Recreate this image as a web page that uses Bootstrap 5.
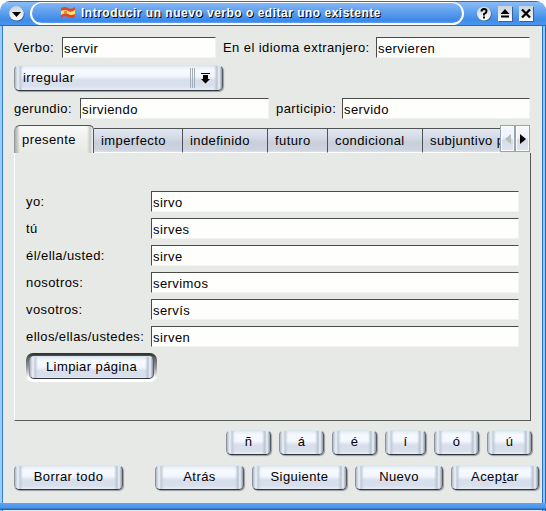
<!DOCTYPE html>
<html lang="es">
<head>
<meta charset="utf-8">
<title>Introducir un nuevo verbo o editar uno existente</title>
<link href="https://cdn.jsdelivr.net/npm/bootstrap@5.3.0/dist/css/bootstrap.min.css" rel="stylesheet">
<style>
body{width:546px;height:511px;background:#fff;font:13px/20px "Liberation Sans",Arial,sans-serif;letter-spacing:.42px;color:#000;overflow:hidden}
.window{width:546px;height:510px;margin-top:1px;background:linear-gradient(90deg,#9ccbfb 0 2px,#2f7fd6 2px 3px,#e7e9e6 3px 542px,#2a6fc0 542px 543px,#93c5fa 543px 545px,#2467ad 545px);border-radius:10px 10px 0 0;overflow:hidden}
.titlebar{height:25px;flex:none;background:linear-gradient(#2a6fc0 0 1px,#8dbdf5 1px,#68a7f0 9px,#3f8ce8 19px,#4b97ee 24px,#2668b5 24px);padding:0 7px 0 9px}
.caption-pill{width:434px;height:23px;margin-left:5px;border:2px solid #fff;border-top-width:1px;border-radius:13px;background:linear-gradient(#82b6f5,#3b87e6 18px,#5ca3f0);color:#fff;font-weight:bold;font-size:12px;letter-spacing:.5px;line-height:20px;text-shadow:1px 1px 0 #000;padding-left:28px;white-space:nowrap}
.caption-pill svg{margin-right:5px;flex:none}
.window-body{height:477px;padding:11px 13px 0 14px;flex:none}
.window-foot{height:7px;flex:none;background:linear-gradient(#5ba3f2,#4a94ec 5px,#2467ad 6px)}
.field{height:21px;border:0;border-top:1px solid #4a4c4a;border-left:1px solid #4a4c4a;border-right:1px solid #f3f4f2;border-bottom:1px solid #f3f4f2;border-radius:0;background:#fefefd;padding:1px 0 0 1px;font:inherit;letter-spacing:inherit;color:#000;line-height:20px;min-width:0;display:block}
.field-row{display:grid;height:21px}
.field-row label{line-height:21px;white-space:nowrap}
.main-fields{grid-template-columns:48px 154px 160px 154px}
.part-fields{grid-template-columns:66px 189px 73px 188px;margin-top:7px}
.indent{padding-left:7px}
.push{height:25px;padding:0 0 1px;border:1px solid;border-color:#dbe5ee #555b65 #30353e #8b929b;border-radius:5px;background:linear-gradient(90deg,#aeb9c7,#edf3fa 3px,#c1cbd8 5px,transparent 8px,transparent calc(100% - 8px),#b8c3d1 calc(100% - 5px),#edf3fa calc(100% - 3px),#8c97a5),linear-gradient(#dfeaf4,#f7faff 4px,#f3f7ff 10px,#d8dfec 14px,#d9e0ec 20px,#e8eef6);box-shadow:1px 1px 1px #999d9f;font:inherit;letter-spacing:inherit;color:#000;line-height:22px}
.push:hover{color:#000}
.combo{width:209px;height:26px;margin-top:7px;padding:0 10px 0 8px;text-align:left}
.combo svg{display:block}
.tabs{height:28px;margin-top:6px;align-items:flex-end;overflow:hidden;position:relative;flex-wrap:nowrap}
.tab-item{height:25px;flex:none;border:0;border-top:1px solid #505355;border-right:1px solid #505355;border-bottom:1px solid #fff;border-radius:0;background:linear-gradient(#e2e8f0,#d5dce8 8px,#c8cfdb 14px,#cdd4e0 21px,#dae1ea);padding:0 0 0 7px;text-align:left;color:#000;line-height:22px;font:inherit;letter-spacing:inherit;white-space:nowrap}
.tab-item.active{height:28px;background:linear-gradient(90deg,#a9abaa,#fff0 5px,#fff0 calc(100% - 6px),#c9cbc9 calc(100% - 3px),#f2f3f1),linear-gradient(#fafaf9,#eeefed 15px,#e7e9e6);border:1px solid #505355;border-left-color:#999b99;border-bottom:0;border-radius:6px 5px 0 0}
.t1{width:80px}.t2{width:89px}.t3{width:85px}.t4{width:60px}.t5{width:95px}.t6{width:77px;overflow:hidden;border-right:0}
.scroller{height:27px;flex:none;border:1px solid #95a3b4;background:linear-gradient(#f4f7fc,#eef2fa 12px,#d4dbe7 14px,#e0e6ef);box-shadow:inset 1px 1px #fff,inset -1px -1px #f8fafc;padding:0;width:15px;align-self:flex-start;display:flex;align-items:center;justify-content:center}
.pane{width:517px;height:268px;border-left:1px solid #fff;border-right:1px solid #555957;border-bottom:1px solid #555957;padding:38px 11px 0}
.forms{display:grid;grid-template-columns:125px 368px;row-gap:6px}
.forms label{line-height:22px;height:21px;white-space:nowrap}
.default-ring{width:131px;height:29px;margin-top:6px;padding:3px;border-radius:7px;background:linear-gradient(#292d2d,#5e6260 5px,#9b9e9c 15px,#fff 25px)}
.default-ring .push{width:125px;height:23px;line-height:20px;box-shadow:none}
.letters{display:grid;grid-template-columns:45px 45px 45px 41px 45px 45px;gap:8px;justify-content:end;margin:9px 1px 0 0}
.actions{display:grid;grid-template-columns:108px 89px 96px 88px 89px;column-gap:8px;margin-top:10px}
.actions{grid-template-columns:109px 16px 89px 95px 88px 88px;column-gap:8px}
</style>
<script src="https://cdn.jsdelivr.net/npm/bootstrap@5.3.0/dist/js/bootstrap.bundle.min.js"></script>
</head>
<body>
<main class="window d-flex flex-column">
 <header class="titlebar d-flex align-items-center">
  <svg width="16" height="17" viewBox="0 0 16 17" class="flex-shrink-0"><defs><linearGradient id="metal" x2="0" y2="1"><stop stop-color="#c9d2db"/><stop offset="1" stop-color="#fff"/></linearGradient></defs><circle cx="8" cy="9" r="7.5" fill="#39628e"/><circle cx="7.5" cy="8.3" r="7.3" fill="url(#metal)"/><path d="M3 7h9l-4.5 5z"/></svg>
  <div class="caption-pill d-flex align-items-center">
   <svg width="16" height="14" viewBox="0 0 16 14"><path d="M1 2q4-2 7 0t7-1v10q-4 2-7 0t-7 1z" fill="#e34431"/><path d="M1 5q4-2 7 0t7-1v4q-4 2-7 0t-7 1z" fill="#ffe668"/><path d="M4 5h3v3H4z" fill="#d88b41"/></svg><span>Introducir un nuevo verbo o editar uno existente</span>
  </div>
  <div class="d-flex ms-auto align-items-center">
  <svg width="63" height="17" viewBox="0 0 63 17"><circle cx="8.7" cy="9.2" r="7" fill="#39628e"/><circle cx="8" cy="8.5" r="7" fill="url(#metal)"/><path d="M5.5 6.5q0-2.5 2.5-2.5t2.5 2.2q0 1.4-2.5 2.8v1.5M8 11.5v2" fill="none" stroke="#000" stroke-width="2"/><path d="M23 2h14v15H23zM44 2h14v15H44z" fill="#39628e"/><path d="M22 1h14v15H22zM43 1h14v15H43z" fill="url(#metal)"/><path d="M24.5 9 29 4l4.500 5zM25 10.500h8v2h-8z"/><path d="m46 4.500 8 8m0-8-8 8" stroke="#000" stroke-width="2.300"/></svg>
  </div>
 </header>
 <form class="window-body">
  <div class="field-row main-fields"><label for="verb">Verbo:</label><input id="verb" class="field" value="servir"><label class="indent" for="foreign">En el idioma extranjero:</label><input id="foreign" class="field" value="servieren"></div>
  <button type="button" class="push combo d-flex align-items-center justify-content-between"><span>irregular</span><svg width="22" height="20" viewBox="0 0 22 20"><path d="M.5 0v20M2.500 0v20M4.500 0v20" stroke="#a4aebb"/><path d="M11 5h9v1h-9zM13 7h5v4h2l-4.500 4.500L11 11h2z"/></svg></button>
  <div class="field-row part-fields"><label for="ger">gerundio:</label><input id="ger" class="field" value="sirviendo"><label class="indent" for="part">participio:</label><input id="part" class="field" value="servido"></div>
  <div class="tabs d-flex" role="tablist">
   <button type="button" class="tab-item active t1">presente</button><button type="button" class="tab-item t2">imperfecto</button><button type="button" class="tab-item t3">indefinido</button><button type="button" class="tab-item t4">futuro</button><button type="button" class="tab-item t5">condicional</button><button type="button" class="tab-item t6">subjuntivo presente</button>
   <button type="button" class="scroller" aria-label="Anterior"><svg width="6" height="10"><path d="M6 0v10L0 5z" fill="#b9bdbc"/></svg></button><button type="button" class="scroller" aria-label="Siguiente"><svg width="6" height="10"><path d="M0 0v10l6-5z"/></svg></button>
  </div>
  <section class="pane">
   <div class="forms">
    <label for="f1">yo:</label><input id="f1" class="field" value="sirvo">
    <label for="f2">tú</label><input id="f2" class="field" value="sirves">
    <label for="f3">él/ella/usted:</label><input id="f3" class="field" value="sirve">
    <label for="f4">nosotros:</label><input id="f4" class="field" value="servimos">
    <label for="f5">vosotros:</label><input id="f5" class="field" value="servís">
    <label for="f6">ellos/ellas/ustedes:</label><input id="f6" class="field" value="sirven">
   </div>
   <div class="default-ring d-flex"><button type="button" class="push">Limpiar página</button></div>
  </section>
  <div class="letters"><button type="button" class="push">ñ</button><button type="button" class="push">á</button><button type="button" class="push">é</button><button type="button" class="push">í</button><button type="button" class="push">ó</button><button type="button" class="push">ú</button></div>
  <div class="actions"><button type="button" class="push">Borrar todo</button><span></span><button type="button" class="push">Atrás</button><button type="button" class="push">Siguiente</button><button type="button" class="push">Nuevo</button><button type="button" class="push">Acep<u>t</u>ar</button></div>
 </form>
 <footer class="window-foot"></footer>
</main>
</body>
</html>
